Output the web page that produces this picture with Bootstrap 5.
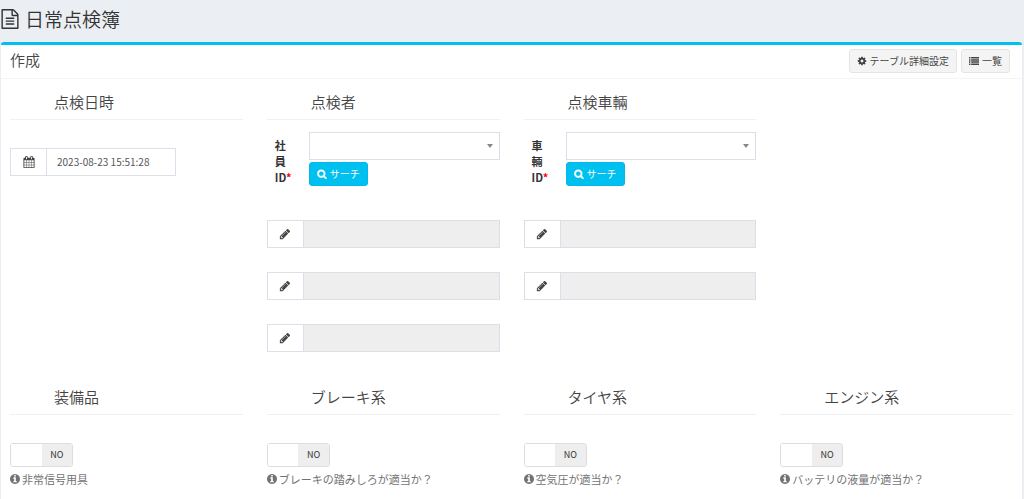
<!DOCTYPE html>
<html lang="ja">
<head>
<meta charset="utf-8">
<meta name="viewport" content="width=device-width, initial-scale=1">
<title>日常点検簿</title>
<link href="https://cdn.jsdelivr.net/npm/bootstrap@5.3.0/dist/css/bootstrap.min.css" rel="stylesheet">
<style>
  body { background: #ebeff4; color: #444; font: 11px/16px "Noto Sans CJK JP", sans-serif; }
  .fa-icon { width: 12px; height: 12px; fill: currentColor; flex: none; }
  .page-title { font-size: 19px; line-height: 28px; font-weight: 350; color: #333; margin: 0; padding: 5px 0 9px; gap: 5px; }
  .page-title .fa-icon { width: 20px; height: 20px; }
  .panel { background: #fff; border-top: 3px solid #00c0ef; border-radius: 3px 3px 0 0; margin: 0 2px 0 1px; }
  .panel-top { min-height: 34px; padding: 4px 12px 4px 9px; border-bottom: 1px solid #f4f4f4; }
  .panel-top h2 { font-size: 15px; line-height: 22px; font-weight: 350; margin: 0; }
  .panel-main { padding: 11px 9px; }
  .section-title { font-size: 15px; line-height: 24px; font-weight: 350; margin: 0 0 12px; padding: 0 0 5px 44px; border-bottom: 1px solid #f0f0f0; }
  .tool-btn, .search-btn { --bs-btn-font-size: 10px; --bs-btn-line-height: 16px; --bs-btn-padding-y: 3px; --bs-btn-padding-x: 7px; --bs-btn-border-radius: 3px; display: inline-flex; align-items: center; gap: 3px; }
  .tool-btn { --bs-btn-bg: #f4f4f4; --bs-btn-border-color: #e4e4e4; --bs-btn-color: #444; --bs-btn-hover-bg: #e7e7e7; }
  .tool-btn .fa-icon, .search-btn .fa-icon { width: 10px; height: 10px; }
  .search-btn { --bs-btn-bg: #00c0ef; --bs-btn-border-color: #00b9e8; --bs-btn-color: #fff; --bs-btn-hover-bg: #00acd6; --bs-btn-hover-color: #fff; margin-top: 2px; }
  .search-btn .fa-icon { stroke: currentColor; stroke-width: 90; }
  .field { height: 28px; margin-bottom: 24px; }
  .field .input-group-text { width: 37px; justify-content: center; padding: 0; background: #fff; border-color: #dcdfe7; border-radius: 0; color: #444; }
  .field .form-control { font-size: 10px; line-height: 16px; padding: 5px 10px; border-color: #dcdfe7; border-radius: 0; color: #555; }
  .field .form-control:disabled { background: #eee; }
  .date-field { max-width: 166px; margin-top: 28px; }
  .id-row { min-height: 64px; margin-bottom: 24px; }
  .id-label { width: 42px; flex: none; padding: 5px 16px 0 8px; font-weight: 700; color: #333; }
  .picker { height: 28px; font-size: 11px; border: 1px solid #dcdfe7; border-radius: 0; padding: 4px 24px 4px 8px;
    background: #fff linear-gradient(#fff, #fff); }
  .picker-wrap { position: relative; }
  .picker-wrap::after { content: ""; position: absolute; right: 7px; top: 12px; border: solid transparent; border-width: 4px 3px 0; border-top-color: #888; pointer-events: none; }
  .sections-top { min-height: 295px; }
  .switch { width: 63px; height: 24px; border: 1px solid #ddd; border-radius: 3px; overflow: hidden; margin-top: 28px; cursor: pointer; font-size: 9px; color: #333; }
  .switch input { appearance: none; margin: 0; flex: 1 1 0; background: #fff; cursor: pointer; }
  .switch span { flex: 1 1 0; background: #eee; text-align: center; line-height: 22px; }
  .hint { color: #737373; gap: 2px; margin: 4px 0 0; }
  .hint .fa-icon { width: 10px; height: 10px; }
</style>
</head>
<body class="min-vh-100 d-flex flex-column">
<svg class="d-none" aria-hidden="true">
  <symbol id="i-file" viewBox="0 0 1792 1792"><path d="M1596 380q28 28 48 76t20 88v1152q0 40-28 68t-68 28h-1344q-40 0-68-28t-28-68v-1600q0-40 28-68t68-28h896q40 0 88 20t76 48zm-444-244v376h376q-10-29-22-41l-313-313q-12-12-41-22zm384 1528v-1024h-416q-40 0-68-28t-28-68v-416h-768v1536h1280zm-1024-864q0-14 9-23t23-9h704q14 0 23 9t9 23v64q0 14-9 23t-23 9h-704q-14 0-23-9t-9-23v-64zm736 224q14 0 23 9t9 23v64q0 14-9 23t-23 9h-704q-14 0-23-9t-9-23v-64q0-14 9-23t23-9h704zm0 256q14 0 23 9t9 23v64q0 14-9 23t-23 9h-704q-14 0-23-9t-9-23v-64q0-14 9-23t23-9h704z"/></symbol>
  <symbol id="i-cog" viewBox="0 0 1792 1792"><path d="M1152 896q0-106-75-181t-181-75-181 75-75 181 75 181 181 75 181-75 75-181zm512-109v222q0 12-8 23t-20 13l-185 28q-19 54-39 91 35 50 107 138 10 12 10 25t-9 23q-27 37-99 108t-94 71q-12 0-26-9l-138-108q-44 23-91 38-16 136-29 186-7 28-36 28h-222q-14 0-24.500-8.500t-11.500-21.500l-28-184q-49-16-90-37l-141 107q-10 9-25 9-14 0-25-11-126-114-165-168-7-10-7-23 0-12 8-23 15-21 51-66.500t54-70.500q-27-50-41-99l-183-27q-13-2-21-12.500t-8-23.500v-222q0-12 8-23t19-13l186-28q14-46 39-92-40-57-107-138-10-12-10-24 0-10 9-23 26-36 98.500-107.500t94.500-71.500q13 0 26 10l138 107q44-23 91-38 16-136 29-186 7-28 36-28h222q14 0 24.500 8.500t11.500 21.500l28 184q49 16 90 37l142-107q9-9 24-9 13 0 25 10 129 119 165 170 7 8 7 22 0 12-8 23-15 21-51 66.500t-54 70.500q26 50 41 98l183 28q13 2 21 12.500t8 23.500z"/></symbol>
  <symbol id="i-list" viewBox="0 0 1792 1792"><path d="M0 192h256v256H0zM384 192h1408v256H384zM0 576h256v256H0zM384 576h1408v256H384zM0 960h256v256H0zM384 960h1408v256H384zM0 1344h256v256H0zM384 1344h1408v256H384z"/></symbol>
  <symbol id="i-calendar" viewBox="0 0 1792 1792"><path d="M192 1664h288v-288h-288v288zm352 0h320v-288h-320v288zm-352-352h288v-320h-288v320zm352 0h320v-320h-320v320zm-352-384h288v-288h-288v288zm736 736h320v-288h-320v288zm-384-736h320v-288h-320v288zm768 736h288v-288h-288v288zm-384-352h320v-320h-320v320zm-352-864v-288q0-13-9.500-22.500t-22.500-9.500h-64q-13 0-22.500 9.500t-9.500 22.500v288q0 13 9.500 22.500t22.500 9.500h64q13 0 22.500-9.500t9.500-22.500zm736 864h288v-320h-288v320zm-384-384h320v-288h-320v288zm384 0h288v-288h-288v288zm32-480v-288q0-13-9.500-22.500t-22.500-9.500h-64q-13 0-22.500 9.500t-9.500 22.500v288q0 13 9.500 22.500t22.500 9.500h64q13 0 22.500-9.500t9.500-22.500zm384-64v1280q0 52-38 90t-90 38h-1408q-52 0-90-38t-38-90v-1280q0-52 38-90t90-38h128v-96q0-66 47-113t113-47h64q66 0 113 47t47 113v96h384v-96q0-66 47-113t113-47h64q66 0 113 47t47 113v96h128q52 0 90 38t38 90z"/></symbol>
  <symbol id="i-pencil" viewBox="0 0 1792 1792"><path d="M491 1536l91-91-235-235-91 91v107h128v128h107zm523-928q0-22-22-22-10 0-17 7l-542 542q-7 7-7 17 0 22 22 22 10 0 17-7l542-542q7-7 7-17zm-54-192l416 416-832 832h-416v-416zm683 96q0 53-37 90l-166 166-416-416 166-165q36-38 90-38 53 0 91 38l235 234q37 39 37 91z"/></symbol>
  <symbol id="i-search" viewBox="0 0 1792 1792"><path d="M1216 832q0-185-131.500-316.500t-316.500-131.500-316.500 131.500-131.500 316.500 131.500 316.500 316.500 131.500 316.500-131.500 131.500-316.500zm512 832q0 52-38 90t-90 38q-54 0-90-38l-343-342q-179 124-399 124-143 0-273.500-55.500t-225-150-150-225-55.500-273.500 55.500-273.500 150-225 225-150 273.500-55.500 273.500 55.500 225 150 150 225 55.500 273.500q0 220-124 399l343 343q37 37 37 90z"/></symbol>
  <symbol id="i-info" viewBox="128 128 1536 1536"><path d="M1152 1376v-160q0-14-9-23t-23-9h-96v-512q0-14-9-23t-23-9h-320q-14 0-23 9t-9 23v160q0 14 9 23t23 9h96v320h-96q-14 0-23 9t-9 23v160q0 14 9 23t23 9h448q14 0 23-9t9-23zm-128-896v-160q0-14-9-23t-23-9h-192q-14 0-23 9t-9 23v160q0 14 9 23t23 9h192q14 0 23-9t9-23zm640 416q0 209-103 385.500t-279.500 279.500-385.500 103-385.500-103-279.500-279.500-103-385.500 103-385.500 279.500-279.500 385.500-103 385.500 103 279.500 279.500 103 385.500z"/></symbol>
</svg>

<h1 class="page-title d-flex align-items-center"><svg class="fa-icon" aria-hidden="true"><use href="#i-file"/></svg>日常点検簿</h1>

<main class="panel flex-grow-1">
  <div class="panel-top d-flex align-items-start justify-content-between">
    <h2>作成</h2>
    <div class="d-flex gap-1">
      <button type="button" class="btn tool-btn"><svg class="fa-icon" aria-hidden="true"><use href="#i-cog"/></svg>テーブル詳細設定</button>
      <button type="button" class="btn tool-btn"><svg class="fa-icon" aria-hidden="true"><use href="#i-list"/></svg>一覧</button>
    </div>
  </div>

  <form class="panel-main">
    <div class="row row-cols-1 row-cols-sm-2 row-cols-lg-4 sections-top">
      <section class="col">
        <h3 class="section-title">点検日時</h3>
        <div class="input-group flex-nowrap field date-field">
          <label class="input-group-text" for="inspected" aria-label="点検日時"><svg class="fa-icon" aria-hidden="true"><use href="#i-calendar"/></svg></label>
          <input type="text" class="form-control" id="inspected" value="2023-08-23 15:51:28">
        </div>
      </section>
      <section class="col">
        <h3 class="section-title">点検者</h3>
        <div class="d-flex id-row">
          <label class="id-label" for="staff">社員 <span class="text-nowrap">ID<span style="color:red">*</span></span></label>
          <div class="flex-grow-1">
            <div class="picker-wrap"><select class="form-select picker" id="staff"><option></option></select></div>
            <button type="button" class="btn search-btn"><svg class="fa-icon" aria-hidden="true"><use href="#i-search"/></svg>サーチ</button>
          </div>
        </div>
        <div class="input-group flex-nowrap field">
          <label class="input-group-text" for="s1"><svg class="fa-icon" aria-hidden="true"><use href="#i-pencil"/></svg></label>
          <input type="text" class="form-control" id="s1" disabled>
        </div>
        <div class="input-group flex-nowrap field">
          <label class="input-group-text" for="s2"><svg class="fa-icon" aria-hidden="true"><use href="#i-pencil"/></svg></label>
          <input type="text" class="form-control" id="s2" disabled>
        </div>
        <div class="input-group flex-nowrap field">
          <label class="input-group-text" for="s3"><svg class="fa-icon" aria-hidden="true"><use href="#i-pencil"/></svg></label>
          <input type="text" class="form-control" id="s3" disabled>
        </div>
      </section>
      <section class="col">
        <h3 class="section-title">点検車輛</h3>
        <div class="d-flex id-row">
          <label class="id-label" for="car">車輛 <span class="text-nowrap">ID<span style="color:red">*</span></span></label>
          <div class="flex-grow-1">
            <div class="picker-wrap"><select class="form-select picker" id="car"><option></option></select></div>
            <button type="button" class="btn search-btn"><svg class="fa-icon" aria-hidden="true"><use href="#i-search"/></svg>サーチ</button>
          </div>
        </div>
        <div class="input-group flex-nowrap field">
          <label class="input-group-text" for="c1"><svg class="fa-icon" aria-hidden="true"><use href="#i-pencil"/></svg></label>
          <input type="text" class="form-control" id="c1" disabled>
        </div>
        <div class="input-group flex-nowrap field">
          <label class="input-group-text" for="c2"><svg class="fa-icon" aria-hidden="true"><use href="#i-pencil"/></svg></label>
          <input type="text" class="form-control" id="c2" disabled>
        </div>
      </section>
    </div>

    <div class="row row-cols-1 row-cols-sm-2 row-cols-lg-4">
      <section class="col">
        <h3 class="section-title">装備品</h3>
        <label class="switch d-flex"><input type="checkbox" aria-describedby="h1"><span>NO</span></label>
        <p class="hint d-flex align-items-center" id="h1"><svg class="fa-icon" aria-hidden="true"><use href="#i-info"/></svg>非常信号用具</p>
      </section>
      <section class="col">
        <h3 class="section-title">ブレーキ系</h3>
        <label class="switch d-flex"><input type="checkbox" aria-describedby="h2"><span>NO</span></label>
        <p class="hint d-flex align-items-center" id="h2"><svg class="fa-icon" aria-hidden="true"><use href="#i-info"/></svg>ブレーキの踏みしろが適当か？</p>
      </section>
      <section class="col">
        <h3 class="section-title">タイヤ系</h3>
        <label class="switch d-flex"><input type="checkbox" aria-describedby="h3"><span>NO</span></label>
        <p class="hint d-flex align-items-center" id="h3"><svg class="fa-icon" aria-hidden="true"><use href="#i-info"/></svg>空気圧が適当か？</p>
      </section>
      <section class="col">
        <h3 class="section-title">エンジン系</h3>
        <label class="switch d-flex"><input type="checkbox" aria-describedby="h4"><span>NO</span></label>
        <p class="hint d-flex align-items-center" id="h4"><svg class="fa-icon" aria-hidden="true"><use href="#i-info"/></svg>バッテリの液量が適当か？</p>
      </section>
    </div>
  </form>
</main>
<script src="https://cdn.jsdelivr.net/npm/bootstrap@5.3.0/dist/js/bootstrap.bundle.min.js"></script>
</body>
</html>
